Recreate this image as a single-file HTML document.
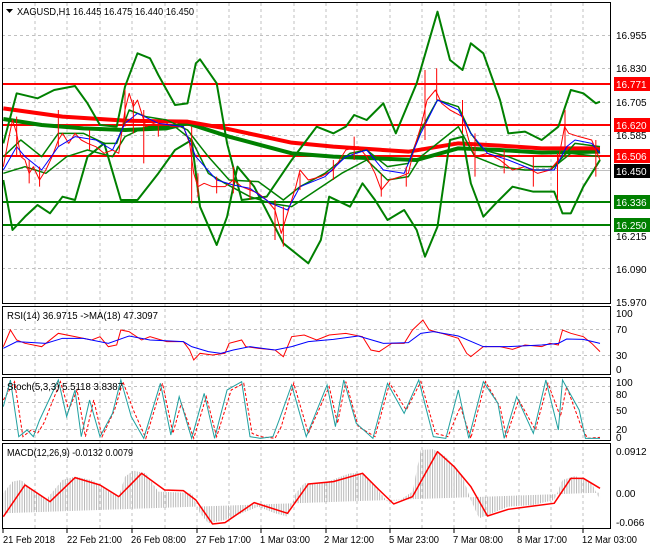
<!DOCTYPE html>
<html><head><meta charset="utf-8"><style>
html,body{margin:0;padding:0;background:#fff;width:650px;height:550px;overflow:hidden}
svg{display:block;font-family:"Liberation Sans",sans-serif;font-size:10px}
</style></head><body>
<svg width="650" height="550" viewBox="0 0 650 550">
<defs>
<pattern id="hs" width="2.4" height="10" patternUnits="userSpaceOnUse"><rect x="0" y="0" width="1" height="10" fill="#b8b8b8"/></pattern>
</defs>
<rect width="650" height="550" fill="#fff"/>
<g stroke="#c0c0c0" stroke-dasharray="3,3" stroke-width="1">
<line x1="35" y1="3" x2="35" y2="528"/><line x1="67" y1="3" x2="67" y2="528"/><line x1="100" y1="3" x2="100" y2="528"/><line x1="132" y1="3" x2="132" y2="528"/><line x1="165" y1="3" x2="165" y2="528"/><line x1="197" y1="3" x2="197" y2="528"/><line x1="229" y1="3" x2="229" y2="528"/><line x1="261" y1="3" x2="261" y2="528"/><line x1="294" y1="3" x2="294" y2="528"/><line x1="326" y1="3" x2="326" y2="528"/><line x1="357" y1="3" x2="357" y2="528"/><line x1="390" y1="3" x2="390" y2="528"/><line x1="422" y1="3" x2="422" y2="528"/><line x1="454" y1="3" x2="454" y2="528"/><line x1="486" y1="3" x2="486" y2="528"/><line x1="519" y1="3" x2="519" y2="528"/><line x1="551" y1="3" x2="551" y2="528"/><line x1="583" y1="3" x2="583" y2="528"/>
<line x1="2" y1="35.5" x2="611" y2="35.5"/><line x1="2" y1="68.5" x2="611" y2="68.5"/><line x1="2" y1="102.5" x2="611" y2="102.5"/><line x1="2" y1="135.5" x2="611" y2="135.5"/><line x1="2" y1="168.5" x2="611" y2="168.5"/><line x1="2" y1="235.5" x2="611" y2="235.5"/><line x1="2" y1="268.5" x2="611" y2="268.5"/>
<line x1="2" y1="329.5" x2="611" y2="329.5"/><line x1="2" y1="355.5" x2="611" y2="355.5"/>
<line x1="2" y1="429.5" x2="611" y2="429.5"/><line x1="2" y1="402.5" x2="611" y2="402.5"/><line x1="2" y1="386.5" x2="611" y2="386.5"/>
</g>
<g stroke-width="2">
<line x1="2" y1="84" x2="611" y2="84" stroke="#f00"/>
<line x1="2" y1="125" x2="611" y2="125" stroke="#f00"/>
<line x1="2" y1="156" x2="611" y2="156" stroke="#f00"/>
<line x1="2" y1="202" x2="611" y2="202" stroke="#008000"/>
<line x1="2" y1="225" x2="611" y2="225" stroke="#008000"/>
</g>
<line x1="2" y1="170.5" x2="611" y2="170.5" stroke="#c0c0c0"/>
<g transform="scale(0.41667,0.33333)" fill="none" stroke-linejoin="round">
<polyline vector-effect="non-scaling-stroke" stroke="#008000" stroke-width="4" points="8,357 100,375 200,385 300,390 400,385 450,370 550,410 700,460 800,470 1000,480 1100,445 1200,450 1300,458 1440,455"/>
<polyline vector-effect="non-scaling-stroke" stroke="#f00" stroke-width="4" points="8,325 150,350 300,362 450,365 540,385 700,428 800,440 980,455 1100,430 1200,437 1300,445 1440,445"/>
<polyline vector-effect="non-scaling-stroke" stroke="#008000" stroke-width="2" points="8,430 40,280 90,295 130,270 180,258 210,310 240,375 280,380 300,260 330,160 360,175 380,225 420,315 450,310 470,190 480,178 520,250 545,430 580,600 640,590 700,480 760,380 800,400 830,380 850,345 880,360 920,310 950,400 1000,250 1050,35 1080,180 1110,210 1130,130 1160,160 1200,300 1220,400 1260,395 1300,420 1340,380 1370,270 1400,280 1430,310 1440,305"/>
<polyline vector-effect="non-scaling-stroke" stroke="#008000" stroke-width="2" points="8,540 30,690 60,650 90,615 120,640 150,590 180,600 210,470 250,430 290,600 330,600 380,520 420,450 460,420 480,620 520,735 545,650 570,500 610,560 680,730 740,790 770,720 790,590 840,620 870,550 900,600 930,660 970,630 1000,690 1020,770 1050,680 1080,420 1110,410 1130,550 1160,650 1190,610 1230,560 1280,575 1330,575 1350,640 1370,640 1400,560 1430,500 1440,480"/>
<polyline vector-effect="non-scaling-stroke" stroke="#008000" stroke-width="1.5" points="8,470 50,420 100,470 140,400 200,400 250,430 280,430 310,330 350,350 400,360 450,390 500,470 550,540 620,545 680,600 720,560 780,520 840,460 880,450 930,500 980,490 1010,390 1050,300 1100,320 1130,400 1160,450 1220,470 1280,500 1330,500 1380,430 1440,440"/>
<polyline vector-effect="non-scaling-stroke" stroke="#008000" stroke-width="1.5" points="8,520 60,500 110,520 160,470 210,450 270,470 300,410 350,380 420,380 460,420 500,520 540,550 600,590 650,610 700,620 760,570 820,520 880,480 930,540 980,530 1010,470 1060,420 1100,380 1140,470 1200,500 1260,510 1320,510 1370,460 1440,470"/>
<polyline vector-effect="non-scaling-stroke" stroke="#f00" stroke-width="1" points="8,500 20,420 30,360 40,400 50,470 60,480 70,520 80,500 95,540 110,510 125,470 140,420 150,400 165,430 180,400 195,420 210,430 230,440 250,460 270,450 285,460 300,330 310,280 320,320 330,300 340,340 350,380 370,370 390,360 410,380 440,380 455,430 465,520 475,560 490,550 510,560 540,560 560,540 580,560 600,570 620,580 640,600 660,630 675,700 690,640 710,560 720,510 740,540 770,530 800,510 830,450 860,440 880,470 900,520 915,570 935,540 960,530 980,520 995,440 1010,380 1025,300 1045,270 1060,310 1080,330 1110,350 1125,420 1140,470 1170,460 1200,480 1230,510 1260,500 1290,520 1320,510 1340,480 1355,380 1365,400 1390,410 1420,420 1440,480"/>
<polyline vector-effect="non-scaling-stroke" stroke="#00f" stroke-width="1" points="8,510 40,440 60,470 100,510 140,440 180,410 230,420 270,450 300,370 330,340 380,370 440,380 470,470 520,540 560,555 600,565 650,610 690,630 720,560 780,530 830,470 880,450 920,510 970,520 1010,400 1050,300 1100,330 1130,400 1170,460 1220,480 1280,510 1330,510 1360,440 1380,420 1420,430 1440,460"/>
<path vector-effect="non-scaling-stroke" stroke="#f00" stroke-width="1" d="M40 350V470M70 480V550M95 500V560M140 330V440M215 390V450M300 270V380M320 300V400M345 330V490M380 360V410M460 380V610M475 520V590M520 530V580M560 500V580M600 540V600M660 600V720M680 620V740M720 520V570M800 480V540M850 410V480M915 520V590M975 500V560M1020 210V420M1048 205V300M1110 300V400M1140 400V530M1210 450V520M1280 470V560M1338 460V600M1356 330V440M1430 420V530"/>
</g>
<g fill="none" stroke="#000" stroke-width="1">
<rect x="2.5" y="2.5" width="608" height="301"/>
<rect x="2.5" y="306.5" width="608" height="68"/>
<rect x="2.5" y="377.5" width="608" height="63"/>
<rect x="2.5" y="443.5" width="608" height="85"/>
</g>
<g transform="translate(0,300) scale(0.41667,0.3333)" fill="none">
<polyline vector-effect="non-scaling-stroke" stroke="#f00" stroke-width="1" points="8,140 25,90 40,120 60,130 100,140 140,100 180,110 220,120 240,110 260,140 280,135 290,90 310,95 340,120 360,110 400,125 440,125 455,150 465,180 480,160 510,165 540,160 550,130 580,120 590,140 620,145 660,150 680,170 700,110 730,105 760,120 790,105 830,100 870,110 890,150 910,155 940,130 970,130 990,90 1015,60 1030,90 1060,100 1100,115 1120,160 1130,170 1160,140 1200,140 1230,148 1260,135 1300,140 1320,130 1340,135 1350,90 1370,100 1400,110 1420,130 1440,155"/>
<polyline vector-effect="non-scaling-stroke" stroke="#00f" stroke-width="1" points="8,145 40,125 110,130 150,115 200,115 260,130 310,108 360,120 440,125 460,140 500,155 530,160 560,150 600,140 660,150 700,140 740,125 800,118 860,108 920,130 980,128 1010,100 1040,95 1100,108 1160,140 1220,140 1300,135 1340,130 1360,117 1400,118 1440,130"/>
<polyline vector-effect="non-scaling-stroke" stroke="#f00" stroke-width="1" stroke-dasharray="3,2" points="8,300 35,245 55,410 75,390 90,400 105,370 145,245 165,330 185,270 205,410 225,300 245,410 275,330 295,245 320,330 350,415 390,250 415,400 435,310 465,415 495,290 520,410 555,270 585,250 605,400 625,410 660,415 675,380 705,250 740,400 790,260 810,370 830,245 860,380 900,410 935,250 975,330 1010,245 1045,400 1075,410 1105,320 1130,415 1165,245 1200,320 1215,410 1245,300 1285,390 1315,250 1345,350 1360,260 1395,380 1410,415 1440,412"/>
<polyline vector-effect="non-scaling-stroke" stroke="#20a0a0" stroke-width="1" points="8,320 25,240 45,410 65,390 80,410 95,360 140,240 160,350 180,270 195,410 215,300 240,410 270,340 290,240 315,350 345,415 385,250 410,405 430,290 460,415 490,280 515,415 545,270 580,245 600,410 625,415 655,410 670,360 700,255 735,410 785,255 805,380 825,240 855,370 895,415 930,250 970,340 1005,240 1040,410 1070,415 1100,270 1125,415 1160,245 1195,310 1210,415 1240,290 1280,400 1310,240 1340,390 1350,240 1390,330 1405,415 1440,415"/>
<polygon fill="url(#hs)" transform="scale(2.4,3)" points="3.3,213.3 3.3,193 12.5,181.7 20.8,180 33.3,190 45.8,200 62.5,180 75,176.7 91.7,180 108.3,190 118.8,196.7 125,176.7 133.3,170.7 145.8,173.3 158.3,191.7 183.3,192.7 191.7,193.3 200,213.3 208.3,223.3 225,220 241.7,213.3 258.3,206.7 275,213.3 287.5,216.7 295.8,193.3 304.2,183.3 325,182.7 350,173.3 362.5,173.3 375,186.7 387.5,201.7 400,200 412.5,191.7 420.8,150 433.3,149.3 445.8,156.7 462.5,176.7 470.8,200 479.2,218.3 491.7,213.3 508.3,206.7 533.3,205 554.2,200 562.5,180 575,176 591.7,183.3 600,200 600,192.7"/>
<polyline vector-effect="non-scaling-stroke" stroke="#f00" stroke-width="1.5" stroke-linejoin="round" points="8,650 60,555 120,605 180,533 240,555 285,590 340,520 395,570 440,572 470,600 510,672 540,668 610,608 690,640 740,552 800,545 870,520 910,570 945,612 990,590 1050,455 1090,500 1130,560 1170,648 1220,628 1280,618 1330,610 1370,535 1400,535 1440,565"/>
</g>
<path d="M6 9 L13 9 L9.5 13 Z" fill="#000"/>
<text x="17" y="15" fill="#000" textLength="177" lengthAdjust="spacingAndGlyphs">XAGUSD,H1  16.445 16.475 16.440 16.450</text>
<text x="7" y="319" fill="#000" textLength="151" lengthAdjust="spacingAndGlyphs">RSI(14) 36.9715  -&gt;MA(18) 47.3097</text>
<text x="7" y="390" fill="#000" textLength="116" lengthAdjust="spacingAndGlyphs">Stoch(5,3,3) 5.5118 3.8387</text>
<text x="7" y="456" fill="#000" textLength="126" lengthAdjust="spacingAndGlyphs">MACD(12,26,9) -0.0132 0.0079</text>
<g fill="#000">
<text x="616" y="39">16.955</text><text x="616" y="72">16.830</text><text x="616" y="106">16.705</text><text x="616" y="139">16.585</text><text x="616" y="240">16.215</text><text x="616" y="273">16.090</text><text x="616" y="306">15.970</text>
<text x="616" y="317">100</text><text x="616" y="333">70</text><text x="616" y="359">30</text><text x="616" y="373">0</text>
<text x="616" y="386">100</text><text x="616" y="398">80</text><text x="616" y="414">50</text><text x="616" y="433">20</text><text x="616" y="441">0</text>
<text x="616" y="455">0.0912</text><text x="616" y="497">0.00</text><text x="616" y="526">-0.066</text>
</g>
<rect x="614" y="77" width="36" height="14" fill="#f00"/><text x="616" y="88" fill="#fff">16.771</text>
<rect x="614" y="118" width="36" height="14" fill="#f00"/><text x="616" y="129" fill="#fff">16.620</text>
<rect x="614" y="149" width="36" height="14" fill="#f00"/><text x="616" y="160" fill="#fff">16.506</text>
<rect x="614" y="164" width="36" height="14" fill="#000"/><text x="616" y="175" fill="#fff">16.450</text>
<rect x="614" y="195" width="36" height="14" fill="#008000"/><text x="616" y="206" fill="#fff">16.336</text>
<rect x="614" y="218" width="36" height="14" fill="#008000"/><text x="616" y="229" fill="#fff">16.250</text>
<g stroke="#000"><line x1="3" y1="529" x2="3" y2="533"/><line x1="67" y1="529" x2="67" y2="533"/><line x1="132" y1="529" x2="132" y2="533"/><line x1="197" y1="529" x2="197" y2="533"/><line x1="261" y1="529" x2="261" y2="533"/><line x1="326" y1="529" x2="326" y2="533"/><line x1="390" y1="529" x2="390" y2="533"/><line x1="454" y1="529" x2="454" y2="533"/><line x1="519" y1="529" x2="519" y2="533"/><line x1="583" y1="529" x2="583" y2="533"/></g>
<g fill="#000">
<text x="3" y="543" textLength="52" lengthAdjust="spacingAndGlyphs">21 Feb 2018</text>
<text x="67" y="543" textLength="55" lengthAdjust="spacingAndGlyphs">22 Feb 21:00</text>
<text x="131" y="543" textLength="55" lengthAdjust="spacingAndGlyphs">26 Feb 08:00</text>
<text x="196" y="543" textLength="55" lengthAdjust="spacingAndGlyphs">27 Feb 17:00</text>
<text x="260" y="543" textLength="50" lengthAdjust="spacingAndGlyphs">1 Mar 03:00</text>
<text x="324" y="543" textLength="50" lengthAdjust="spacingAndGlyphs">2 Mar 12:00</text>
<text x="389" y="543" textLength="50" lengthAdjust="spacingAndGlyphs">5 Mar 23:00</text>
<text x="453" y="543" textLength="50" lengthAdjust="spacingAndGlyphs">7 Mar 08:00</text>
<text x="517" y="543" textLength="50" lengthAdjust="spacingAndGlyphs">8 Mar 17:00</text>
<text x="582" y="543" textLength="55" lengthAdjust="spacingAndGlyphs">12 Mar 03:00</text>
</g>
</svg>
</body></html>
